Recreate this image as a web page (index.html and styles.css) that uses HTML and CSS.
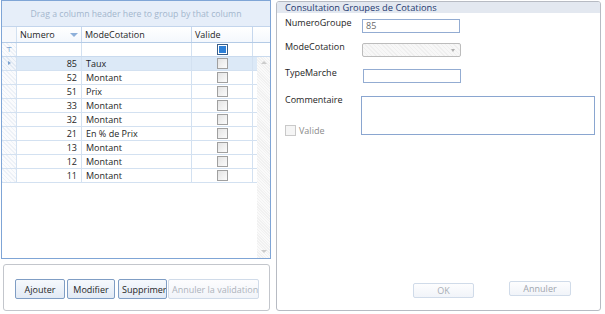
FILE: index.html
```html
<!DOCTYPE html>
<html lang="fr">
<head>
    <meta charset="UTF-8">
    <title>Consultation Groupes de Cotations</title>
    <link rel="stylesheet" href="styles.css">
</head>
<body>
    <div class="app">
        <!-- Colonne gauche : grille + boutons -->
        <div class="left">
            <div class="grid">
                <div class="group-panel">Drag a column header here to group by that column</div>

                <div class="grid-head">
                    <div class="cell rh"></div>
                    <div class="cell head">Numero<span class="sort"></span></div>
                    <div class="cell head">ModeCotation</div>
                    <div class="cell head">Valide</div>
                    <div class="cell head filler"></div>
                </div>

                <div class="grid-filter">
                    <div class="cell rh"><span class="funnel">&#x22A4;</span></div>
                    <div class="cell"></div>
                    <div class="cell"></div>
                    <div class="cell center"><span class="check check-on"></span></div>
                    <div class="cell filler"></div>
                </div>

                <div class="grid-body">
                    <div class="rows" id="rows"></div>
                    <div class="scrollbar">
                        <span class="arrow-up"></span>
                        <span class="arrow-down"></span>
                    </div>
                </div>
            </div>

            <div class="actions">
                <button class="btn">Ajouter</button>
                <button class="btn">Modifier</button>
                <button class="btn btn-clip">Supprimer</button>
                <button class="btn btn-clip btn-off">Annuler la validation</button>
            </div>
        </div>

        <!-- Panneau de droite : détail -->
        <div class="panel">
            <div class="panel-title">Consultation Groupes de Cotations</div>

            <div class="form">
                <div class="field">
                    <label class="lbl">NumeroGroupe</label>
                    <div class="input input-ro">85</div>
                </div>
                <div class="field">
                    <label class="lbl">ModeCotation</label>
                    <div class="input combo"><span class="combo-arrow"></span></div>
                </div>
                <div class="field field-type">
                    <label class="lbl">TypeMarche</label>
                    <div class="input input-type"></div>
                </div>
                <div class="field field-comment">
                    <div class="lbl-col">
                        <label class="lbl">Commentaire</label>
                        <div class="valide"><span class="check check-off"></span>Valide</div>
                    </div>
                    <div class="textarea"></div>
                </div>
            </div>

            <div class="panel-footer">
                <button class="btn btn-off btn-ok">OK</button>
                <button class="btn btn-off btn-cancel">Annuler</button>
            </div>
        </div>
    </div>

    <script>
        // Lignes de la grille
        const groupes = [
            { numero: 85, mode: 'Taux' },
            { numero: 52, mode: 'Montant' },
            { numero: 51, mode: 'Prix' },
            { numero: 33, mode: 'Montant' },
            { numero: 32, mode: 'Montant' },
            { numero: 21, mode: 'En % de Prix' },
            { numero: 13, mode: 'Montant' },
            { numero: 12, mode: 'Montant' },
            { numero: 11, mode: 'Montant' }
        ];

        const rows = document.getElementById('rows');
        groupes.forEach((g, i) => {
            const row = document.createElement('div');
            row.classList.add('row');
            if (i === 0) row.classList.add('row-current');
            row.innerHTML =
                '<div class="cell rh">' + (i === 0 ? '<span class="current"></span>' : '') + '</div>' +
                '<div class="cell num">' + g.numero + '</div>' +
                '<div class="cell">' + g.mode + '</div>' +
                '<div class="cell center"><span class="check"></span></div>';
            rows.appendChild(row);
        });
    </script>
</body>
</html>
```

FILE: styles.css
```css
/* Base */
* {
    margin: 0;
    padding: 0;
    box-sizing: border-box;
}

body {
    background: #ffffff;
    color: #1e1e1e;
    font-family: 'Open Sans', 'Noto Sans', sans-serif;
    font-size: 9px;
    width: 605px;
    height: 314px;
    overflow: hidden;
}

.app {
    display: flex;
    height: 314px;
}

/* Colonne gauche */
.left {
    width: 270px;
    margin-left: 1px;
    display: flex;
    flex-direction: column;
}

.grid {
    height: 259px;
    border: 1px solid #7fa5d6;
    display: flex;
    flex-direction: column;
    background: #ffffff;
}

.group-panel {
    height: 26px;
    background: #e6eef9;
    border-bottom: 1px solid #c3d5ec;
    color: #a3b6cd;
    text-align: center;
    line-height: 26px;
    font-size: 8.7px;
}

.grid-head,
.grid-filter,
.row {
    display: grid;
    grid-template-columns: 15px 65px 110px 61px 1fr;
}

.row {
    grid-template-columns: 15px 65px 110px 61px;
    height: 14px;
    border-bottom: 1px solid #d3e1f1;
}

.grid-head {
    height: 16px;
    border-bottom: 1px solid #b4cbe6;
    background: linear-gradient(#ffffff, #f4f8fd);
}

.grid-filter {
    height: 14px;
    border-bottom: 1px solid #c9daee;
}

.cell {
    border-right: 1px solid #d3e1f1;
    line-height: 13px;
    padding: 0 4px;
    white-space: nowrap;
    overflow: hidden;
    position: relative;
}

.head {
    line-height: 15px;
    padding-left: 3px;
    border-right-color: #c6d7ed;
}

.filler {
    border-right: none;
}

.rh {
    padding: 0;
    background: repeating-linear-gradient(45deg, #edf1f7 0 1px, #fafbfd 1px 3px);
}

.grid-head .rh {
    background: #f6f8fc;
}

.num {
    text-align: right;
}

.center {
    display: flex;
    align-items: center;
    justify-content: center;
}

.sort {
    position: absolute;
    right: 3px;
    top: 6px;
    border-left: 4px solid transparent;
    border-right: 4px solid transparent;
    border-top: 4px solid #8eb0da;
}

.funnel {
    display: block;
    text-align: center;
    color: #4f86c6;
    font-size: 7px;
    line-height: 13px;
}

.current {
    position: absolute;
    left: 6px;
    top: 4px;
    border-top: 2.5px solid transparent;
    border-bottom: 2.5px solid transparent;
    border-left: 3px solid #7fa3cf;
}

.row-current {
    background: #dce9f7;
}

.row-current .rh {
    background: repeating-linear-gradient(45deg, #e2eaf4 0 1px, #f3f6fb 1px 3px);
}

.grid-body {
    flex: 1;
    display: flex;
}

.rows {
    flex: 1;
}

.scrollbar {
    width: 13px;
    background: repeating-linear-gradient(45deg, #f1f1f1 0 1px, #fafafa 1px 2px);
    position: relative;
}

.arrow-up,
.arrow-down {
    position: absolute;
    left: 4px;
    border-left: 3px solid transparent;
    border-right: 3px solid transparent;
}

.arrow-up {
    top: 4px;
    border-bottom: 3px solid #cccccc;
}

.arrow-down {
    bottom: 5px;
    border-top: 3px solid #cccccc;
}

/* Cases à cocher */
.check {
    display: inline-block;
    width: 11px;
    height: 11px;
    border: 1px solid #a0a0a0;
    background: linear-gradient(135deg, #e4e4e4, #fbfbfb);
}

.check-on {
    border-color: #3a5f8a;
    background: #2d7fd6;
    box-shadow: inset 0 0 0 1px #ffffff;
}

.check-off {
    border-color: #c9c9c9;
    background: #f5f5f5;
}

/* Boutons */
.actions {
    margin: 5px 0 0 2px;
    width: 267px;
    height: 47px;
    border: 1px solid #c3c6cc;
    border-radius: 3px;
    display: flex;
    align-items: flex-start;
    gap: 2px;
    padding: 14px 0 0 11px;
}

.btn {
    font-family: inherit;
    font-size: 9px;
    color: #1e1e1e;
    height: 20px;
    padding: 0 2px;
    border: 1px solid #7f9dc4;
    border-radius: 2px;
    background: linear-gradient(#f6f9fd, #e2eaf5);
    white-space: nowrap;
    overflow: hidden;
}

.actions .btn:nth-child(1) { width: 50px; }
.actions .btn:nth-child(2) { width: 48px; }
.actions .btn:nth-child(3) { width: 49px; margin-left: 1px; }
.actions .btn:nth-child(4) { width: 91px; margin-left: -1px; }

.btn-clip {
    text-align: left;
    padding-left: 3px;
}

.btn-off {
    color: #adb3bb;
    border-color: #d0dbe9;
    background: linear-gradient(#fdfdfe, #f1f4f9);
}

/* Panneau de droite */
.panel {
    margin: 1px 0 0 5px;
    width: 325px;
    height: 310px;
    border: 1px solid #b7bbc3;
    border-radius: 3px;
    display: flex;
    flex-direction: column;
    overflow: hidden;
}

.panel-title {
    height: 11px;
    background: #e3e8f0;
    color: #1f3a70;
    line-height: 11px;
    padding-left: 8px;
    font-size: 9.3px;
}

.form {
    display: flex;
    flex-direction: column;
    gap: 10px;
    padding: 6px 0 0 8px;
}

.field {
    display: flex;
    align-items: flex-start;
}

.field-type {
    margin-top: 2px;
}

.field-comment {
    margin-top: 3px;
}

.lbl {
    width: 77px;
    line-height: 12px;
    margin-top: -2px;
    display: block;
}

.lbl-col {
    width: 76px;
    height: 39px;
    display: flex;
    flex-direction: column;
    justify-content: space-between;
}

.valide {
    display: flex;
    align-items: center;
    gap: 3px;
    color: #8c8c8c;
    margin-bottom: -2px;
}

.input {
    width: 98px;
    height: 14px;
    border: 1px solid #93acd2;
    line-height: 12px;
    padding-left: 3px;
    position: relative;
}

.input-ro {
    color: #6a6a6a;
}

.input-type {
    margin-left: 1px;
}

.combo {
    width: 99px;
    border-color: #bcbcbc;
    border-radius: 2px;
    background: repeating-linear-gradient(45deg, #efefef 0 1px, #f7f7f7 1px 3px);
}

.combo-arrow {
    position: absolute;
    right: 5px;
    top: 5px;
    border-left: 2.5px solid transparent;
    border-right: 2.5px solid transparent;
    border-top: 3px solid #b0b0b0;
}

.textarea {
    width: 234px;
    height: 39px;
    border: 1px solid #8aa6d0;
}

.panel-footer {
    margin-top: auto;
    display: flex;
    align-items: flex-start;
    padding: 0 0 12px 136px;
}

.btn-ok {
    width: 61px;
    height: 15px;
    margin-top: 2px;
    color: #a9aeb5;
}

.btn-cancel {
    width: 62px;
    height: 15px;
    margin-left: 35px;
    color: #9fa5ad;
}
```
